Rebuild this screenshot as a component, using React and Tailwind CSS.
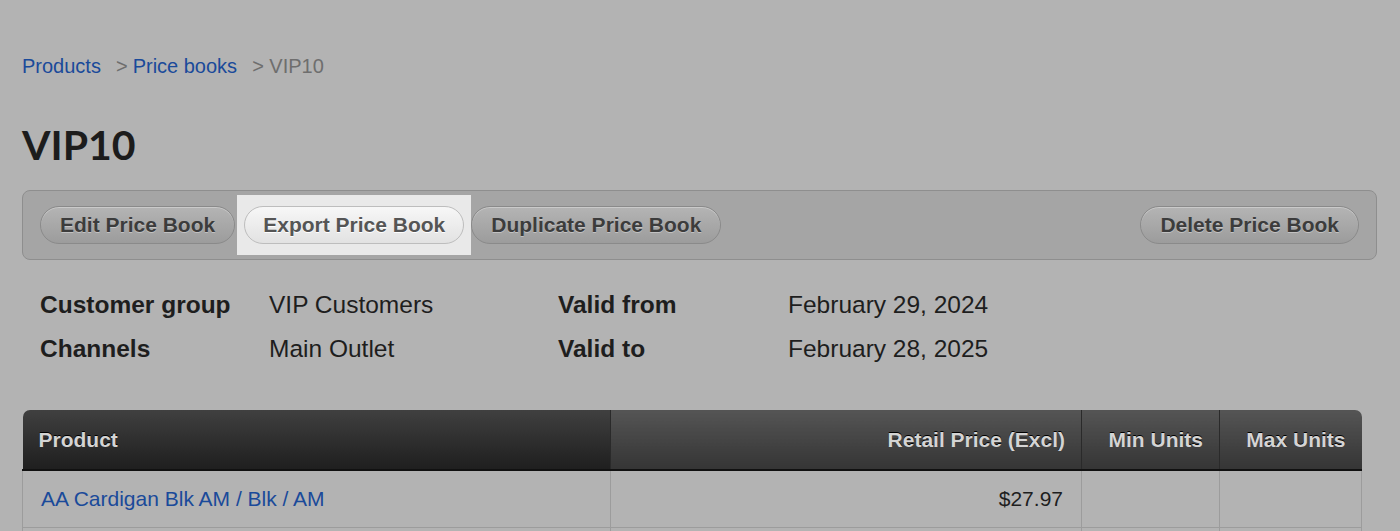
import React from 'react';

const buttonClass =
  'h-[38px] px-[19px] rounded-full border border-[#8a8a8a] bg-gradient-to-b from-[#b4b4b4] to-[#9c9c9c] text-[#3c3c3c] text-[21px] font-bold [text-shadow:0_1px_0_rgba(255,255,255,0.35)] shadow-[inset_0_1px_0_rgba(255,255,255,0.3)]';

const App = () => {
  return (
    <div className="h-[531px] bg-[#b3b3b3] px-[22px] pt-[52px] font-[family-name:'Liberation_Sans',Arial,sans-serif] overflow-hidden">
      {/* breadcrumb */}
      <div className="flex items-center text-[20px] leading-[28px] text-[#6e6e6e]">
        <span className="text-[#1a4a9a]">Products</span>
        <span className="ml-[15px]">&gt;</span>
        <span className="ml-[5px] text-[#1a4a9a]">Price books</span>
        <span className="ml-[15px]">&gt; VIP10</span>
      </div>

      <h1 className="mt-[40px] text-[41px] leading-[50px] font-bold text-[#1c1c1c] font-[family-name:'Lato',sans-serif]">VIP10</h1>

      {/* toolbar */}
      <div className="mt-[20px] w-[1355px] h-[70px] rounded-[8px] border border-[#8e8e8e] bg-[#a5a5a5] flex items-center pl-[17px] pr-[17px]">
        <button className={buttonClass}>Edit Price Book</button>
        <div className="ml-[2px] h-[60px] px-[7px] bg-[#e9e9e9] flex items-center justify-center">
          <button className="h-[38px] px-[18px] rounded-full border border-[#bdbdbd] bg-gradient-to-b from-[#f7f7f7] to-[#e2e2e2] text-[#555555] text-[21px] font-bold [text-shadow:0_1px_0_#ffffff]">
            Export Price Book
          </button>
        </div>
        <button className={buttonClass}>Duplicate Price Book</button>
        <div className="flex-1" />
        <button className={buttonClass}>Delete Price Book</button>
      </div>

      {/* details */}
      <div className="mt-[31px] pl-[18px] grid grid-cols-[229px_289px_230px_1fr] gap-y-[16px] text-[24.5px] leading-[28px] text-[#1e1e1e]">
        <div className="font-bold">Customer group</div>
        <div>VIP Customers</div>
        <div className="font-bold">Valid from</div>
        <div>February 29, 2024</div>
        <div className="font-bold">Channels</div>
        <div>Main Outlet</div>
        <div className="font-bold">Valid to</div>
        <div>February 28, 2025</div>
      </div>

      {/* table */}
      <table className="mt-[47px] w-[1340px] border-collapse text-[21px]">
        <thead>
          <tr className="h-[60px] text-[#d4d4d4] font-bold [text-shadow:0_-1px_0_#000]">
            <th className="w-[588px] rounded-tl-[7px] bg-gradient-to-b from-[#404040] to-[#1f1f1f] border-b-2 border-[#111] text-left pl-[16px] font-bold">
              Product
            </th>
            <th className="w-[471px] bg-gradient-to-b from-[#555555] to-[#353535] border-l border-[#2a2a2a] border-b-2 border-b-[#111] text-right pr-[16px] font-bold">
              Retail Price (Excl)
            </th>
            <th className="w-[138px] bg-gradient-to-b from-[#555555] to-[#353535] border-l border-[#2a2a2a] border-b-2 border-b-[#111] text-right pr-[16px] font-bold">
              Min Units
            </th>
            <th className="rounded-tr-[7px] bg-gradient-to-b from-[#555555] to-[#353535] border-l border-[#2a2a2a] border-b-2 border-b-[#111] text-right pr-[16px] font-bold">
              Max Units
            </th>
          </tr>
        </thead>
        <tbody>
          <tr className="h-[57px] text-[#1e1e1e]">
            <td className="border border-[#9c9c9c] pl-[18px] text-[#1a4a9a]">AA Cardigan Blk AM / Blk / AM</td>
            <td className="border border-[#9c9c9c] text-right pr-[18px]">$27.97</td>
            <td className="border border-[#9c9c9c]"></td>
            <td className="border border-[#9c9c9c]"></td>
          </tr>
          <tr className="h-[57px]">
            <td className="border border-[#9c9c9c]"></td>
            <td className="border border-[#9c9c9c]"></td>
            <td className="border border-[#9c9c9c]"></td>
            <td className="border border-[#9c9c9c]"></td>
          </tr>
        </tbody>
      </table>
    </div>
  );
};

export default App;
